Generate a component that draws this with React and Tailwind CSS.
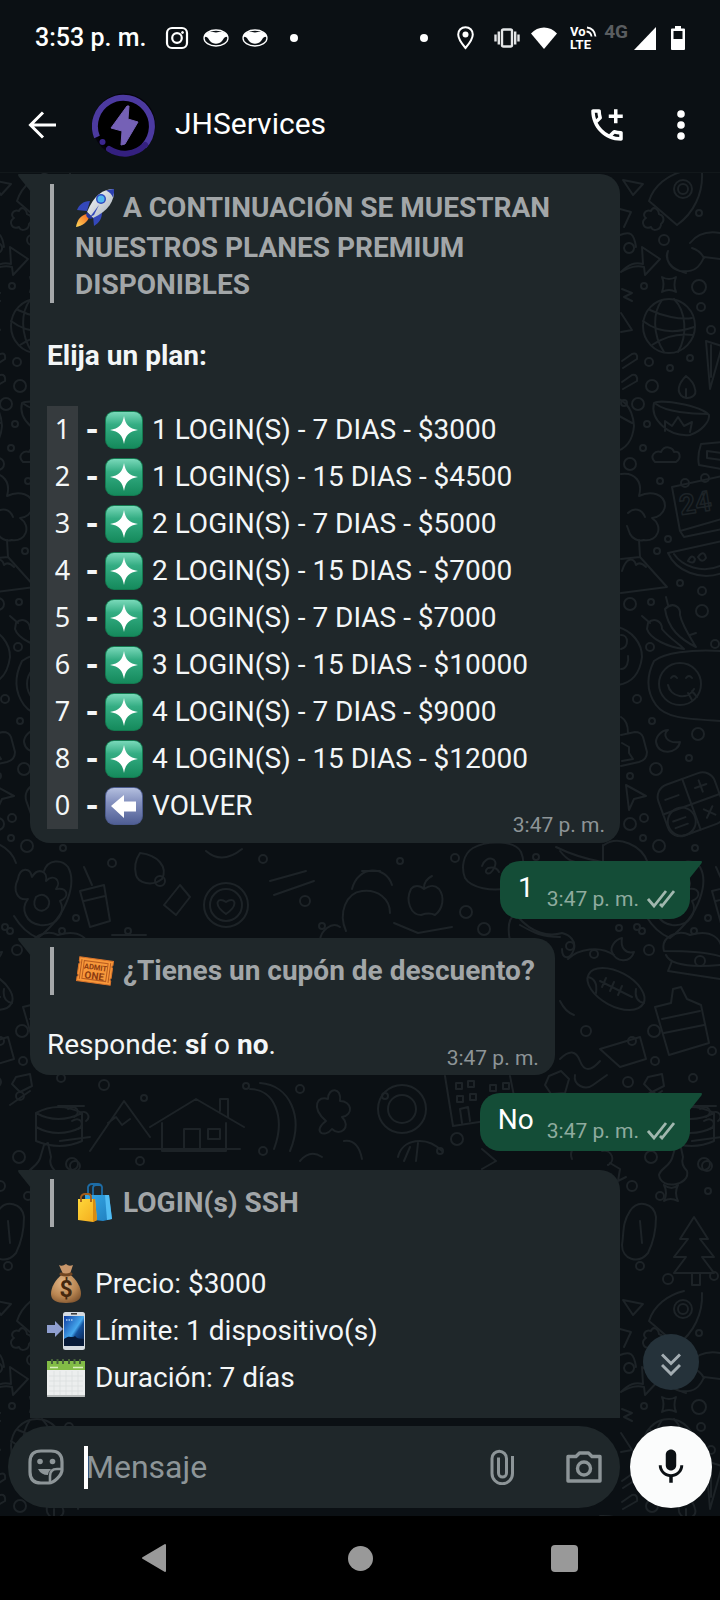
import React from 'react';
import { MdOutlineAddIcCall, MdMic } from 'react-icons/md';

const FONT = "font-['Roboto','Noto_Sans',sans-serif]";

/* ---------- wallpaper ---------- */

const dots = [
  [699, 212, 3], [664, 239, 5], [699, 286, 7], [644, 285, 3], [701, 306, 4], [711, 329, 4],
  [649, 361, 4], [670, 367, 3], [690, 357, 3], [652, 385, 6], [638, 403, 6], [624, 402, 3],
  [647, 423, 3], [643, 447, 3], [630, 463, 6], [660, 480, 3], [668, 538, 3], [657, 550, 3],
  [680, 582, 3], [702, 590, 4], [630, 603, 6], [651, 601, 3], [702, 610, 6], [650, 646, 4],
  [715, 643, 4], [637, 698, 4], [652, 720, 3], [698, 733, 6], [689, 757, 3], [656, 768, 6],
  [630, 775, 3], [630, 823, 6], [644, 817, 4], [643, 837, 3], [659, 845, 6], [695, 847, 3],
  [466, 911, 6], [484, 928, 6], [619, 927, 3], [637, 926, 3], [649, 949, 5], [694, 930, 3],
  [708, 917, 3], [536, 856, 3], [594, 953, 4], [112, 862, 4], [160, 880, 5], [263, 858, 4],
  [305, 900, 5], [322, 925, 3], [455, 857, 4], [400, 860, 3], [128, 930, 3], [570, 945, 4],
  [586, 1030, 5], [632, 1040, 4], [700, 960, 5], [655, 1060, 4], [712, 1050, 4], [20, 1095, 4],
  [104, 1084, 5], [144, 1097, 3], [246, 1085, 3], [263, 1150, 4], [385, 1095, 3], [457, 1138, 6],
  [440, 1150, 3], [628, 1081, 5], [693, 1077, 4], [651, 1156, 6], [704, 1163, 6], [10, 930, 3],
  [632, 1185, 5], [708, 1190, 3], [660, 1195, 4], [640, 1265, 4], [668, 1278, 5], [714, 1275, 4],
  [140, 1160, 4], [75, 1165, 5], [22, 1030, 6], [300, 1088, 4], [570, 1140, 4],
];

function Doodles() {
  return (
    <g id="doodles" fill="none" stroke="#1d2327" strokeWidth="2" strokeLinecap="round" strokeLinejoin="round">
      {dots.map(([x, y, r], i) => <circle key={i} cx={x} cy={y} r={r} />)}
      <path d="M623 179 643 183 633 194Z" />
      <circle cx="683" cy="188" r="9" /><circle cx="683" cy="188" r="5" />
      <path d="M702 172C703 192 694 212 677 224L649 200C654 184 668 174 684 170" />
      <path d="M651 210c-6-2-9 4-5 7-6 4-2 12 5 9 2 5 10 3 10-3 4-3 3-9-2-10-1-6-6-8-8-3" />
      <path d="M620 208 631 211 624 226M620 234c10-4 14-2 16 12M629 242a5 5 0 1 0 .1 0" />
      <path d="M621 271c8-8 14-10 22-8l-1-17 18 12-15 16-1-8c-8-2-14 0-23 5" />
      <path d="M668 250c-3 10 3 18 12 20 14 2 20-4 24-14l16 2M668 250c-4 8 2 18 18 22M690 242c8-10 18-12 30-10M692 247c6 2 10 6 12 10" />
      <path d="M662 276q7 4 14 0-3 8 0 15-7-4-14 0 3-8 0-15Z" />
      <path d="M622 288 632 292 624 296 632 300M621 312l11 17-11 2" />
      <ellipse cx="669" cy="325" rx="26" ry="27" />
      <path d="M643 320C656 330 672 334 694 326M650 309c12 6 30 10 42 8M652 344c12-8 26-12 41-10M662 299c-9 12-10 34 2 52M674 298c12 12 14 36 4 53" />
      <path d="M706 340 722 345 710 388Z M711 344l0 32" />
      <path d="M622 360 632 353q6-2 5 5l-14 9M622 381l10-7q6-1 5 6l-14 8M600 395q32-2 34 30-2 22-20 26M610 410l22 12" />
      <path d="M654 402C650 418 668 436 690 434 702 430 710 420 709 414 700 404 660 398 654 402ZM656 403c10 8 36 10 52 10M686 375c-8 8-10 16-3 21 8 3 14-2 12-8-1-6-5-10-9-13ZM686 388v9M665 430v-10l7 5 6-9 6 9 8-4-2 10" />
      <path d="M655 461c-6-6 0-12 6-10 4-8 12-4 13 0 6-2 8 6 2 10Z" />
      <path d="M722 441 701 443q-4 12-2 21l22 4M707 450l14 2v7l-14-2Z" />
      <path d="M621 473c14-2 22 8 18 22 12-6 26-2 26 10-1 8-8 12-13 12 12 8 6 24-8 22-6 2-12-2-14-6l-3-8M628 512c6-6 14-4 17 4" />
      <path d="M672 486 722 475M672 486l8 44 42-12M680 530l4 6 38-8" />
      <circle cx="685" cy="482" r="4" /><circle cx="705" cy="477" r="4" />
      <text x="681" y="514" fontFamily="Roboto, sans-serif" fontSize="28" fontWeight="700" strokeWidth="1.500" transform="rotate(-9 681 514)">24</text>
      <path d="M668 552 722 540M668 552c8 18 32 28 54 20M674 553c8 12 28 20 46 12M688 560q4-8 7-2-1 6-7 2M698 556q6-8 8 1-4 6-8-1" />
      <path d="M621 592 667 586 640 556 621 558M640 556l-1-17M622 570c4-14 12-14 14-6 4-4 8 0 10 2" />
      <path d="M648 622c6-6 14-2 14 6 6 8 16 14 22 20-16-2-34-10-37-20ZM665 608c8-8 16-2 15 6 2 10 10 22 16 32-16-8-28-18-31-38ZM642 615l8 7M668 604l-2-8M690 634l6-2" />
      <path d="M722 650C690 648 664 652 654 660 646 676 646 690 656 704 666 718 690 718 722 720" />
      <circle cx="680" cy="683" r="21" />
      <path d="M668 684c2 12 20 16 26 4M671 677q3-4 6 0M686 677q3-4 6 0M688 692l4 7M692 690l5 6" />
      <path d="M618 626c14 4 24 16 24 30-2 16-10 26-24 28M621 634c8 0 8 12 0 14M621 668c6 0 8-8 7-13" />
      <path d="M621 765l18-4q8-2 8-10l-4-15q-2-5-8-5l-14 3M621 716q7 4 7 16M622 742l7 4v6l4 6-11 2" />
      <path d="M668 729c-6 4-2 14 12 12-2 12-22 14-24 0 0-6 6-12 12-12Z" />
      <path d="M626 784 646 795 634 798 629 809Z" />
      <g transform="rotate(-20 692 802)">
        <rect x="661" y="776" width="60" height="54" rx="13" />
        <path d="M691 776v54M661 803h60M668 790h14M706 783v12M700 789h12M701 812l9 9M710 812l-9 9M668 813h13M668 820h13" />
        <circle cx="676" cy="816" r="14" />
      </g>
      <path d="M473 847c14-8 42-8 48 4 6 14 0 32-14 36-14 4-36 0-42-10-4-10-2-24 8-30ZM482 865c4-12 18-8 12 2-4 10-12 4-6 0q8-2 11 4" />
      <path d="M556 846q20 10 46 15M560 850c8 10 14 12 22 12M604 844c14-10 38 0 44 18M603 844v16" />
      <path d="M700 866c8 14 2 46-30 71-10-4-18-12-24-22M700 866c-6-8-20-8-24 4" />
      <path d="M622 937c-8 2-12 10-10 14 4 10 18 12 22 0-8 2-14-4-12-14Z" />
      <path d="M510 940c-4-20 2-28 8-24 14 16 30 20 44 16 8 2 14 8 12 16-4 12-12 10-12 0M520 924c14 8 22 12 40 12" />
      <path d="M18 878c2-12 12-12 14-2 6-10 16-6 14 4 8-8 16 0 10 8 12-2 14 8 4 12 6 10-2 26-20 24-14-2-20-16-12-26-10 2-16-8-10-20ZM36 896c8-6 16 2 12 10-6 8-18 2-12-10Z" />
      <path d="M80 890l24-6 6 36-20 6ZM84 900l21-5M92 884l-8-18M112 934h34M140 852c18 2 28 14 22 26-10 8-24 4-26-4-2-8 0-16 4-22Z" />
      <circle cx="226" cy="904" r="22" /><circle cx="226" cy="904" r="16" />
      <path d="M226 913c-14-10-8-18 0-12 8-6 14 2 0 12ZM206 850q16 14 36-2M180 884l-16 20 12 10 14-18ZM270 880l36-10M274 894l40-14" />
      <path d="M346 930c-8-18 0-38 16-40 16-2 28 8 28 22M352 888c6-24 34-24 40-4M362 870h18M394 922l24 10 34-6M411 888c-6 12 0 26 10 26 6-2 10-2 14 0 8-6 10-18 4-26-6-6-12-2-15 0-4-4-10-4-13 0ZM424 887q0-8 8-12M320 940c0-10 12-20 20-14" />
      <path d="M568 958c10-10 32-14 46-4M560 1000c4 8 8 12 14 14" />
      <ellipse cx="616" cy="988" rx="31" ry="17" transform="rotate(28 616 988)" />
      <path d="M600 980 632 996M606 977l-4 9M614 981l-4 9M622 985l-4 9M588 976q10 2 8 16M644 1002q-10-2-8-14" />
      <path d="M664 950c-4-14 14-22 26-16 20-6 34 2 32 22-16-6-44-6-58-6ZM666 954q6 14 54 10M672 960l-4 10 52 8" />
      <path d="M655 1006l16-4 2-14 8-2 6 12 14 6 8 38-40 12ZM662 1018l38-8M664 1032l40-8" />
      <path d="M560 1058q14-14 20 2t20 0M600 1048l20 18 26-8-6-22Z" />
      <path d="M549 1075l12-5 8 8-4 14-14 1-6-9ZM575 1074c-2 10 10 16 18 10l14-10M648 1076l14-3 2 12-12 6-8-8Z" />
      <path d="M445 1075l8 50 65-10M510 1075l8 40M462 1122l-2-14 8-2 2 14M456 1082h6v6h-6ZM468 1080h6v6h-6ZM457 1095h6v6h-6ZM470 1093h6v6h-6ZM490 1084h6v6h-6ZM503 1082h6v6h-6Z" />
      <path d="M690 1105h26M692 1140l30-4M700 1108c8-6 14 4 6 8M704 1120c8-6 14 4 6 8M712 1112c6-4 12 4 6 8" />
      <path d="M673 1154l3-10 4-2 3 14c-2 6 0 10 4 14 4 14-26 20-28 4 2-8 12-8 14-20Z" />
      <path d="M572 1158c-4-10 6-16 12-10 4-10 18-8 18 2 10-2 14 10 6 14M610 1162l10 6-2 12 8-4M482 1148l14 12-14 8" />
      <path d="M150 1126l46-28 48 28M162 1122v28h64v-28M184 1150v-22h16v22M208 1128h12v10h-12ZM220 1110v-12h8v18M120 1148h120" />
      <path d="M90 1150l34-50 26 36M108 1122l8-6 6 8 8-6M36 1112q22-12 46 0v28q-22 10-46 0ZM36 1112q22 12 46 0M36 1126q22 12 46 0M10 1104l20-14M250 1088c24 0 36 28 24 60M260 1082c30 2 44 34 30 68" />
      <path d="M326 1120c-16-14-8-26 2-22 0-12 14-12 12 2 12 0 14 14 2 16 10 10-2 20-10 12-8 10-20 2-6-8ZM344 1140q14-2 18 18" />
      <circle cx="402" cy="1108" r="24" /><circle cx="402" cy="1108" r="14" />
      <path d="M398 1156c4-18 28-22 44-6M404 1160l6-14M416 1160l2-18M300 1160q10-12 22-4" />
      <path d="M630 1210c8-12 24-8 26 6 0 14-2 24-8 36-10 12-26 6-26-8 2-12 0-22 8-34ZM640 1220l2 22" />
      <path d="M694 1216l-14 22h8l-14 18h12l-12 16h40l-12-16h12l-14-18h8ZM692 1272v12h8v-12M664 1184q8 6 14 0-4 8 0 16-8-4-14 0 4-8 0-16Z" />
    </g>
  );
}

function Wallpaper() {
  return (
    <svg className="absolute inset-0 h-full w-full" aria-hidden="true">
      <g transform="translate(0 -172)">
        <Doodles />
        <use href="#doodles" x="-632" />
        <use href="#doodles" x="632" />
        <use href="#doodles" y="1120" />
        <use href="#doodles" x="-632" y="1120" />
        <use href="#doodles" x="632" y="1120" />
      </g>
    </svg>
  );
}

/* ---------- status bar icons ---------- */

function Swim() {
  return (
    <svg width="26" height="18" viewBox="0 0 26 18" fill="none">
      <ellipse cx="13" cy="9" rx="12" ry="8" stroke="#fff" strokeWidth="1.300" />
      <path d="M5 3.500C8 2 10 3.500 13 3.500S18 2 21 3.500C24 5 25 7 25 8.500 22 6.500 21 9.500 19 12 16 15.500 10 15.500 7 12 5 9.500 4 6.500 1 8.500 1 7 2 5 5 3.500Z" fill="#fff" />
    </svg>
  );
}

function StatusBar() {
  return (
    <div className="flex h-[76px] items-center justify-between pl-[35px] pr-[35px] text-white">
      <div className="flex items-center">
        <span className="w-[130px] text-[25px] font-medium leading-[30px]">3:53 p. m.</span>
        <svg width="24" height="24" viewBox="0 0 24 24" fill="none" stroke="#fff" strokeWidth="2.200">
          <rect x="2" y="2" width="20" height="20" rx="5" /><circle cx="12" cy="12" r="4.800" /><circle cx="17.500" cy="6.500" r="1" fill="#fff" strokeWidth="1" />
        </svg>
        <span className="ml-[14px]"><Swim /></span>
        <span className="ml-[13px]"><Swim /></span>
        <span className="ml-[22px] h-2 w-2 rounded-full bg-white" />
      </div>
      <div className="flex items-center">
        <span className="mr-[29px] h-2 w-2 rounded-full bg-white" />
        <svg className="mr-5" width="17" height="24" viewBox="0 0 17 24" fill="none">
          <path d="M8.500 1.200C4.300 1.200 1.200 4.400 1.200 8.500c0 5 7.300 13.500 7.300 13.500s7.300-8.500 7.300-13.500c0-4.100-3.100-7.300-7.300-7.300Z" stroke="#fff" strokeWidth="2" /><circle cx="8.500" cy="8.500" r="3" fill="#fff" />
        </svg>
        <svg className="mr-[11px]" width="26" height="20" viewBox="0 0 26 20" fill="none" stroke="#e4e6e7" strokeWidth="2.400">
          <rect x="8" y="1.500" width="10" height="17" rx="1.500" /><path d="M4.800 3.500v13M1.500 6.500v7M21.200 3.500v13M24.500 6.500v7" />
        </svg>
        <svg className="mr-[13px]" width="26" height="22" viewBox="0 0 26 22" fill="#fff">
          <path d="M13 22 0 6.500C3.500 2.500 8 .5 13 .5s9.500 2 13 6Z" />
        </svg>
        <svg className="mr-[7px]" width="27" height="26" viewBox="0 0 27 26" fill="none">
          <text x="0" y="11" fill="#fff" fontSize="13" fontWeight="700" fontFamily="Roboto, sans-serif">Vo</text>
          <text x="0" y="24" fill="#fff" fontSize="13" fontWeight="700" fontFamily="Roboto, sans-serif">LTE</text>
          <path d="M17 2.500q7.500 1 8.500 9M16.500 6.500q4.500.5 5 5" stroke="#fff" strokeWidth="1.800" />
        </svg>
        <span className="mb-3 mr-[6px] text-[19px] font-bold leading-[20px] text-[#5a5d60]">4G</span>
        <svg className="mr-[15px]" width="22" height="23" viewBox="0 0 22 23" fill="#fff"><path d="M22 0v23H0Z" /></svg>
        <svg width="14" height="24" viewBox="0 0 14 24" fill="#fff">
          <path fillRule="evenodd" d="M4 0h6v2.500h3q1 0 1 1V23q0 1-1 1H1q-1 0-1-1V3.500q0-1 1-1h3ZM2.500 5v8h9V5Z" />
        </svg>
      </div>
    </div>
  );
}

function Avatar() {
  return (
    <svg width="64" height="64" viewBox="0 0 64 64" role="img" aria-label="JHServices">
      <circle cx="32" cy="32" r="31.500" fill="#05030c" />
      <circle cx="32" cy="32" r="29" fill="#000" />
      <path d="M5 44A28.500 28.500 0 1 1 52 53" fill="none" stroke="#4c3aa0" strokeWidth="6" />
      <path d="M53 52A28.500 28.500 0 0 1 17 56" fill="none" stroke="#34207f" strokeWidth="6" strokeLinecap="round" />
      <circle cx="10.500" cy="49" r="3" fill="#3b2690" />
      <path d="M35 13 19 35l11 3-1 14 4-1 13-22-10-3 1-13Z" fill="#7561b6" stroke="#7561b6" strokeLinejoin="round" />
    </svg>
  );
}

function Header() {
  return (
    <header className="relative bg-[#0b1014] pb-[14px]">
      <StatusBar />
      <div className="flex h-[82px] items-center pb-1 pt-5 text-white">
        <button aria-label="Atrás" className="ml-7">
          <svg width="28" height="28" viewBox="0 0 28 28" fill="none" stroke="#fff" strokeWidth="3"><path d="M15 1.500 2.500 14 15 26.500M2.500 14H28" /></svg>
        </button>
        <span className="ml-9"><Avatar /></span>
        <h1 className="ml-[19px] flex-1 pb-[2px] text-[30px] leading-[36px]">JHServices</h1>
        <button aria-label="Llamar" className="mr-[49px]"><MdOutlineAddIcCall size={42} /></button>
        <button aria-label="Más opciones" className="mr-[35px]">
          <svg width="8" height="30" viewBox="0 0 8 30" fill="#fff"><circle cx="4" cy="4" r="3.800" /><circle cx="4" cy="15" r="3.800" /><circle cx="4" cy="26" r="3.800" /></svg>
        </button>
      </div>
    </header>
  );
}

/* ---------- emoji ---------- */

function Rocket() {
  return (
    <svg className="mr-2 inline-block align-middle" width="40" height="40" viewBox="0 0 40 40" aria-hidden="true">
      <defs>
        <linearGradient id="rk" x1="0" y1="0" x2="1" y2="1"><stop offset="0" stopColor="#fff" /><stop offset="1" stopColor="#a3adb8" /></linearGradient>
        <linearGradient id="fl" x1="1" y1="0" x2="0" y2="1"><stop offset="0" stopColor="#f4621e" /><stop offset="1" stopColor="#ffd95a" /></linearGradient>
      </defs>
      <path d="M15 13C8 13 4 17 2 22l10 1ZM27 24c0 7-3 11-8 14l-1-10Z" fill="#3448ba" />
      <path d="M12 26c-6 1-10 6-11 13 6-1 12-5 13-10Z" fill="url(#fl)" />
      <path d="M39 1C28 1 19 7 12 24l6 6C33 23 40 13 39 1Z" fill="url(#rk)" />
      <path d="M39 1q-4 0-8 1.500 5 2 7 7Q39.500 5 39 1Z" fill="#2c40b0" />
      <path d="M12 24c-1 2-1 4 0 5l1 1c2 1 3 1 5 0Z" fill="#27379d" />
      <circle cx="26" cy="11" r="5" fill="#2f4bc0" /><circle cx="26" cy="11" r="3.500" fill="#4fb7ee" />
      <path d="M24 17 15 29l4-2Z" fill="#3448ba" />
    </svg>
  );
}

function Tile({ back }) {
  return (
    <svg width="38" height="38" viewBox="0 0 38 38" aria-hidden="true">
      <defs>
        <linearGradient id="gt" x1="0" y1="0" x2="0" y2="1"><stop offset="0" stopColor="#7ad9ba" /><stop offset=".35" stopColor="#34ad83" /><stop offset="1" stopColor="#158a5c" /></linearGradient>
        <linearGradient id="bt" x1="0" y1="0" x2="0" y2="1"><stop offset="0" stopColor="#b4bfdf" /><stop offset=".4" stopColor="#8390be" /><stop offset="1" stopColor="#505f95" /></linearGradient>
      </defs>
      <rect width="38" height="38" rx="9" fill={back ? '#4b5a8c' : '#13794f'} />
      <rect x="1" y="1" width="36" height="36" rx="8" fill={back ? 'url(#bt)' : 'url(#gt)'} />
      {back
        ? <path d="M6 19 19 8v6.500h12v10H19V31Z" fill="#fff" />
        : <path d="M19 5C20.500 14 24 17.500 33 19 24 20.500 20.500 24 19 33 17.500 24 14 20.500 5 19 14 17.500 17.500 14 19 5Z" fill="#fff" />}
    </svg>
  );
}

function Ticket() {
  return (
    <svg className="mr-2" width="40" height="30" viewBox="0 0 40 30" aria-hidden="true">
      <g transform="rotate(8 20 15)">
        <path d="M3 3h34v4q-2 1.500 0 3v10q-2 1.500 0 3v4H3v-4q2-1.500 0-3V10q2-1.500 0-3Z" fill="#f8983a" stroke="#d8732a" />
        <path d="M8 6h24v18H8ZM5.500 5v20M34.500 5v20" fill="none" stroke="#b85c20" strokeWidth="1" />
        <text x="20" y="14" textAnchor="middle" fontSize="7.500" fontWeight="700" fill="#8c3b10" fontFamily="Roboto, sans-serif">ADMIT</text>
        <text x="20" y="23.500" textAnchor="middle" fontSize="10" fontWeight="700" fill="#8c3b10" fontFamily="Roboto, sans-serif">ONE</text>
      </g>
    </svg>
  );
}

function Bags() {
  return (
    <svg className="mr-2" width="40" height="40" viewBox="0 0 40 40" aria-hidden="true">
      <defs>
        <linearGradient id="bb" x1="0" y1="0" x2="1" y2="1"><stop offset="0" stopColor="#35a9e8" /><stop offset="1" stopColor="#1f7dbd" /></linearGradient>
        <linearGradient id="yb" x1="0" y1="0" x2="1" y2="1"><stop offset="0" stopColor="#ffd83a" /><stop offset="1" stopColor="#f3a91c" /></linearGradient>
      </defs>
      <path d="M13 12V4q1-3 4-3h6q3 0 4 3v10M18 12V5q0-3 3-3h5" fill="none" stroke="#1d6ca5" strokeWidth="1.800" />
      <path d="M10 12h24l3 24-9 2-17-2Z" fill="url(#bb)" /><path d="m30 12 4 0 3 24-5 1Z" fill="#51bdf4" />
      <path d="M3 16h17l2 21-4 2-15-2Z" fill="url(#yb)" /><path d="m18 16 2 0 2 21-4 2Z" fill="#d88c12" />
      <path d="M6 19v-5q1-3 4-3h3q3 0 3 3v5" fill="none" stroke="#a25d1b" strokeWidth="1.800" />
    </svg>
  );
}

function MoneyBag() {
  return (
    <svg width="38" height="40" viewBox="0 0 38 40" aria-hidden="true">
      <defs><radialGradient id="mb" cx=".4" cy=".3" r=".8"><stop offset="0" stopColor="#e2b687" /><stop offset=".6" stopColor="#b98652" /><stop offset="1" stopColor="#7c512c" /></radialGradient></defs>
      <path d="M12 1q3 2 7-1 3 3 7 1l-3 9h-7Z" fill="#c8966a" />
      <path d="M16 10C8 15 4 24 4 30q0 9 15 9t15-9c0-6-4-15-12-20Z" fill="url(#mb)" />
      <path d="M14 10q5 2 10 0" stroke="#714622" strokeWidth="3" fill="none" strokeLinecap="round" />
      <text x="19" y="33" textAnchor="middle" fontSize="23" fontWeight="700" fill="#45280f" fontFamily="Roboto, sans-serif">$</text>
    </svg>
  );
}

function PhoneArrow() {
  return (
    <svg width="38" height="38" viewBox="0 0 38 38" aria-hidden="true">
      <defs><linearGradient id="ph" x1="0" y1="0" x2="1" y2="1"><stop offset="0" stopColor="#0d3aa0" /><stop offset=".5" stopColor="#46a9ee" /><stop offset=".6" stopColor="#14519c" /><stop offset="1" stopColor="#081b40" /></linearGradient></defs>
      <path d="M0 13h8V9l8 8-8 8v-4H0Z" fill="#8f9fd0" />
      <rect x="16" y="0" width="22" height="38" rx="2.500" fill="#d5dbe1" />
      <path d="M24 1.800h6" stroke="#333" strokeWidth="1.500" />
      <rect x="17" y="4" width="20" height="30" fill="url(#ph)" />
      <path d="M17 27c6-5 8 0 11-3 3 4 6 2 9 3v7H17Z" fill="#071a38" />
      <path d="M19 8h7" stroke="#a9cdf4" strokeWidth="1.500" strokeDasharray="1.500 1" />
    </svg>
  );
}

function Calendar() {
  return (
    <svg width="38" height="38" viewBox="0 0 38 38" aria-hidden="true">
      <rect x="0" y="2" width="38" height="36" rx="1" fill="#eceeee" />
      <path d="M0 2h38v9H0Z" fill="#82bc46" />
      <path d="M2 17h34M2 22h34M2 27h34M2 32h34M7 12v24M13 12v24M19 12v24M25 12v24M31 12v24" stroke="#dadddd" strokeWidth=".7" />
      <path d="M5 0v5M10.500 0v5M16 0v5M22 0v5M27.500 0v5M33 0v5" stroke="#46603a" strokeWidth="2" />
      <path d="M3 8.500h8M26 8.500h10" stroke="#d9efbd" strokeWidth="1.600" />
      <path d="M0 37h38" stroke="#a7abab" strokeWidth="1.500" />
    </svg>
  );
}

/* ---------- messages ---------- */

function Time({ className = '' }) {
  return <time className={`whitespace-nowrap text-[21px] leading-[24px] ${className}`}>3:47 p. m.</time>;
}

function Incoming({ className = '', children }) {
  return (
    <article className={`relative ml-[30px] bg-[#1f272a] px-[17px] pt-[9px] text-[28px] text-[#f3f6f7] ${className}`}>
      <svg className="absolute -left-3 top-0" width="13" height="18" viewBox="0 0 13 18" aria-hidden="true"><path d="M1 0h12v18L1 3Q-1 0 1 0Z" fill="#1f272a" /></svg>
      {children}
    </article>
  );
}

function Outgoing({ text }) {
  return (
    <article className="relative mr-[30px] flex h-[58px] gap-[13px] self-end rounded-b-[20px] rounded-tl-[20px] bg-[#144d37] pl-[18px] pr-[15px] text-[28px] text-white">
      <svg className="absolute -right-3 top-0" width="13" height="18" viewBox="0 0 13 18" aria-hidden="true"><path d="M0 0h12q2 0 0 3L0 18Z" fill="#144d37" /></svg>
      <span className="pt-2 leading-[38px]">{text}</span>
      <span className="flex items-center gap-2 self-end pb-2">
        <Time className="text-[#8fab9f]" />
        <svg width="28" height="18" viewBox="0 0 28 18" fill="none" stroke="#a1b8af" strokeWidth="2.800" aria-label="Entregado"><path d="m1 9 6 7L19 1M13 14l2 2L27 1" /></svg>
      </span>
    </article>
  );
}

function Quote({ icon, children }) {
  return (
    <blockquote className="ml-[3px] flex h-12 items-center border-l-4 border-[#a5a8aa] pl-[21px] pr-[3px] font-bold leading-[38px] text-[#a2a6a8]">
      {icon}<span className="whitespace-nowrap">{children}</span>
    </blockquote>
  );
}

const plans = [
  ['1', '1 LOGIN(S) - 7 DIAS - $3000'],
  ['2', '1 LOGIN(S) - 15 DIAS - $4500'],
  ['3', '2 LOGIN(S) - 7 DIAS - $5000'],
  ['4', '2 LOGIN(S) - 15 DIAS - $7000'],
  ['5', '3 LOGIN(S) - 7 DIAS - $7000'],
  ['6', '3 LOGIN(S) - 15 DIAS - $10000'],
  ['7', '4 LOGIN(S) - 7 DIAS - $9000'],
  ['8', '4 LOGIN(S) - 15 DIAS - $12000'],
  ['0', 'VOLVER'],
];

const details = [
  [<MoneyBag />, 'Precio: $3000'],
  [<PhoneArrow />, 'Límite: 1 dispositivo(s)'],
  [<Calendar />, 'Duración: 7 días'],
];

function Chat() {
  return (
    <main className="relative flex flex-1 flex-col items-start pt-px">
      <Incoming className="mr-[100px] self-stretch rounded-b-[20px] rounded-tr-[20px] pb-[14px]">
        <blockquote className="ml-[3px] mt-px border-l-4 border-[#a5a8aa] pl-[21px] font-bold leading-[37px] text-[#a2a6a8]">
          <span className="flex h-[45px] items-center whitespace-nowrap pt-[2px]"><Rocket />A CONTINUACIÓN SE MUESTRAN</span>
          <span className="block">NUESTROS PLANES PREMIUM DISPONIBLES</span>
        </blockquote>
        <p className="mb-8 mt-[34px] font-bold leading-[37px]">Elija un plan:</p>
        <div className="flex items-end">
          <ul className="min-w-0 flex-1">
            {plans.map(([key, label]) => (
              <li key={key} className="flex h-[47px] items-center whitespace-nowrap">
                <code className="flex h-full w-[31px] shrink-0 items-center justify-center bg-[#363b3e] font-['Noto_Sans',sans-serif] text-[27px]">{key}</code>
                <b className="w-[27px] shrink-0 pl-[7px] text-[32px] font-black">-</b>
                <span className="shrink-0"><Tile back={key === '0'} /></span>
                <span className="ml-[9px] shrink-0">{label}</span>
              </li>
            ))}
          </ul>
          <Time className="-mb-2 -mr-0.5 text-[#8d9497]" />
        </div>
      </Incoming>
      <div className="h-[18px]" />
      <Outgoing text="1" />
      <div className="h-[19px]" />
      <Incoming className="rounded-b-[20px] rounded-tr-[20px] pb-[5px]">
        <Quote icon={<Ticket />}>¿Tienes un cupón de descuento?</Quote>
        <div className="mt-[31px] flex items-end justify-between">
          <p className="pb-[6px] leading-[38px]">Responde: <b>sí</b> o <b>no</b>.</p>
          <Time className="-mr-px text-[#8d9497]" />
        </div>
      </Incoming>
      <div className="h-[18px]" />
      <Outgoing text="No" />
      <div className="h-[19px]" />
      <Incoming className="mr-[100px] self-stretch rounded-tr-[20px] pb-[17px]">
        <Quote icon={<Bags />}>LOGIN(s) SSH</Quote>
        <ul className="mt-[33px]">
          {details.map(([icon, label]) => (
            <li key={label} className="flex h-[47px] items-center gap-[10px]">{icon}{label}</li>
          ))}
        </ul>
      </Incoming>
      <button aria-label="Ir al final" className="absolute bottom-[29px] right-[21px] flex h-14 w-14 items-center justify-center rounded-full bg-[#25323a]">
        <svg className="mt-1" width="20" height="23" viewBox="0 0 20 23" fill="none" stroke="#a3adb2" strokeWidth="3"><path d="m1 1.500 9 9 9-9M1 12l9 9 9-9" /></svg>
      </button>
    </main>
  );
}

function Composer() {
  return (
    <form className="relative flex items-center gap-[10px] px-2 pb-2 pt-[7px]" onSubmit={(e) => e.preventDefault()}>
      <div className="flex h-[82px] min-w-0 flex-1 items-center rounded-full bg-[#1f272a] pl-5 pr-[18px]">
        <button type="button" aria-label="Stickers">
          <svg width="36" height="36" viewBox="0 0 36 36" fill="none" stroke="#8d9598" strokeWidth="3.200" strokeLinejoin="round">
            <path d="M13 2h10q11 0 11 11v8c0 5-8 13-13 13h-8Q2 34 2 23V13Q2 2 13 2Z" />
            <path d="M34 20h-5q-7 0-7 7v7" strokeWidth="2.600" />
            <circle cx="12" cy="12.500" r="2.800" fill="#8d9598" stroke="none" /><circle cx="24.500" cy="12.500" r="2.800" fill="#8d9598" stroke="none" />
            <path d="M10 20h13q-3 3-3 6-7 0-10-6Z" fill="#8d9598" stroke="none" />
          </svg>
        </button>
        <div className="relative ml-[22px] min-w-0 flex-1">
          <span className="absolute -left-0.5 top-0 h-[43px] w-1 bg-white" />
          <input aria-label="Mensaje" placeholder="Mensaje" className="block h-[43px] w-full bg-transparent text-[32px] leading-[43px] text-white outline-none placeholder:text-[#8d9598]" />
        </div>
        <button type="button" aria-label="Adjuntar" className="mr-[52px]">
          <svg width="24" height="36" viewBox="0 0 24 36" fill="none" stroke="#8d9598" strokeWidth="3"><path d="M22.500 7v17.500a10 10 0 0 1-20.500 0V9.500a7 7 0 0 1 14.500 0V24a4 4 0 0 1-8 0V8.500" /></svg>
        </button>
        <button type="button" aria-label="Cámara">
          <svg width="36" height="32" viewBox="0 0 36 32" fill="none" stroke="#8d9598" strokeWidth="3.400" strokeLinejoin="round"><path d="M2 5.500h8L13.500 2h9L26 5.500h8v24.500H2Z" /><circle cx="18" cy="17.500" r="6.500" /></svg>
        </button>
      </div>
      <button type="button" aria-label="Grabar audio" className="flex h-[82px] w-[82px] items-center justify-center rounded-full bg-[#fbfcfc] text-[#0b1014]">
        <MdMic size={42} />
      </button>
    </form>
  );
}

function NavBar() {
  return (
    <nav className="relative flex h-[84px] items-center bg-black px-[54px]">
      <button aria-label="Atrás" className="flex flex-1 justify-center"><svg width="30" height="30" viewBox="0 0 30 30" fill="#999" stroke="#999" strokeWidth="2" strokeLinejoin="round"><path d="M24 2v26L2 15Z" /></svg></button>
      <button aria-label="Inicio" className="flex flex-1 justify-center"><span className="h-[25px] w-[25px] rounded-full bg-[#999]" /></button>
      <button aria-label="Recientes" className="flex flex-1 justify-center"><span className="h-[27px] w-[27px] rounded-sm bg-[#999]" /></button>
    </nav>
  );
}

export default function App() {
  return (
    <div className={`flex min-h-screen flex-col bg-[#0b1014] ${FONT}`}>
      <Header />
      <div className="relative flex flex-1 flex-col overflow-hidden border-t border-[#12181b]">
        <Wallpaper />
        <Chat />
        <Composer />
      </div>
      <NavBar />
    </div>
  );
}
